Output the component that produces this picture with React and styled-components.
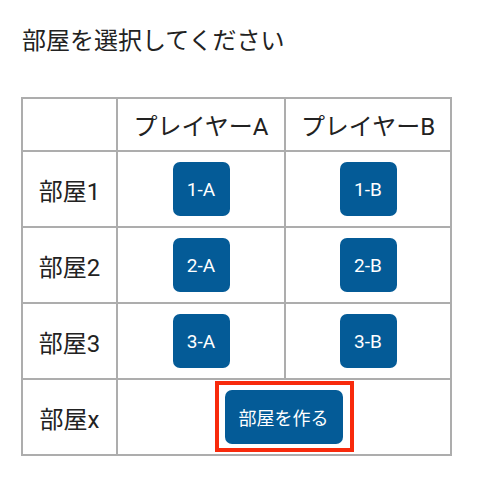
import React from "react";
import styled, { createGlobalStyle } from "styled-components";

const GlobalStyle = createGlobalStyle`
  body {
    margin: 0;
    background: #ffffff;
    font-family: Roboto, "Noto Sans CJK JP", sans-serif;
    color: #222222;
  }
`;

const Page = styled.div`
  padding: 25px 21px;
`;

const Title = styled.h1`
  margin: 0 0 40px 1px;
  font-size: 24px;
  line-height: 32px;
  font-weight: 400;
`;

const Table = styled.table`
  border-collapse: collapse;
  width: 431px;
  table-layout: fixed;
`;

const Cell = styled.td`
  border: 2px solid #adadad;
  text-align: center;
  vertical-align: middle;
  padding: 0;
  height: ${(props) => (props.$header ? "51px" : "74px")};
  width: ${(props) => props.$width || "auto"};
  font-size: 24px;
  font-weight: 400;
`;

const FocusRing = styled.span`
  display: inline-block;
  line-height: 0;
  padding: 5px 7px 4px 6px;
  border: 4px solid #f82a0c;
  margin-top: -2px;
`;

const RoomButton = styled.button`
  height: 54px;
  min-width: 57px;
  padding: 0 14px;
  border: none;
  border-radius: 7px;
  background: #045b97;
  color: #ffffff;
  font-family: Roboto, "Noto Sans CJK JP", sans-serif;
  font-size: ${(props) => (props.$wide ? "18px" : "19px")};
  cursor: pointer;
`;

const rooms = [1, 2, 3];

export default function App() {
  return (
    <>
      <GlobalStyle />
      <Page>
        <Title>部屋を選択してください</Title>
        <Table>
          <tbody>
            <tr>
              <Cell $header $width="93px"></Cell>
              <Cell $header $width="166px">プレイヤーA</Cell>
              <Cell $header>プレイヤーB</Cell>
            </tr>
            {rooms.map((n) => (
              <tr key={n}>
                <Cell>部屋{n}</Cell>
                <Cell>
                  <RoomButton>{n}-A</RoomButton>
                </Cell>
                <Cell>
                  <RoomButton>{n}-B</RoomButton>
                </Cell>
              </tr>
            ))}
            <tr>
              <Cell>部屋x</Cell>
              <Cell colSpan={2}>
                <FocusRing>
                  <RoomButton $wide>部屋を作る</RoomButton>
                </FocusRing>
              </Cell>
            </tr>
          </tbody>
        </Table>
      </Page>
    </>
  );
}
